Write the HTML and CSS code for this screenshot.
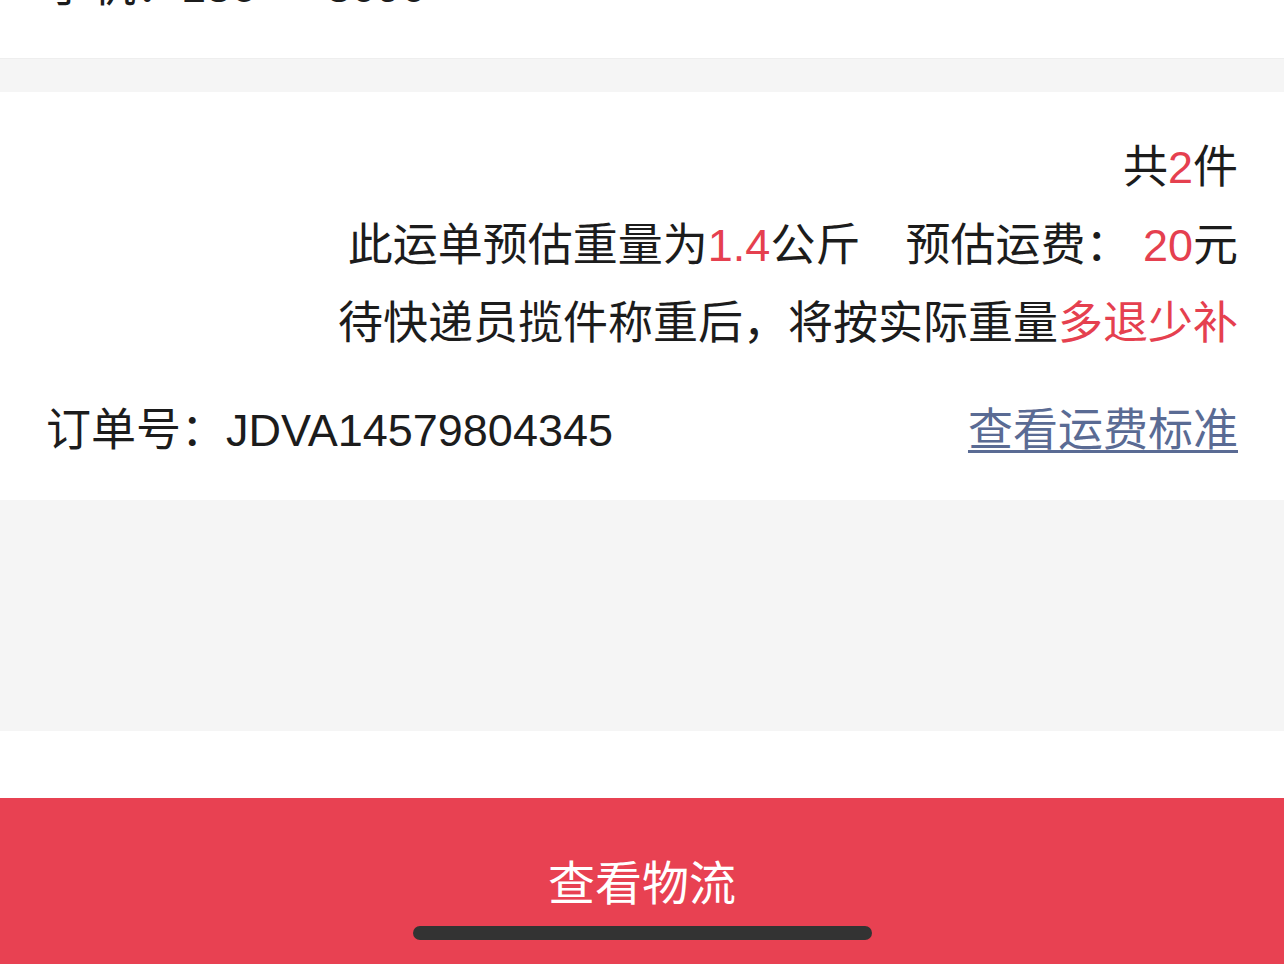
FILE: index.html
```html
<!DOCTYPE html>
<html lang="zh-CN">

<head>
    <meta charset="UTF-8">
    <title>订单详情</title>
    <link rel="stylesheet" href="styles.css">
</head>

<body>
    <div class="page">
        <div class="section top">
            <div class="line">手机：186****8090</div>
        </div>

        <div class="section detail">
            <div class="line right">共<span class="red">2</span>件</div>
            <div class="line right">此运单预估重量为<span class="red">1.4</span>公斤　预估运费： <span class="red">20</span>元</div>
            <div class="line right">待快递员揽件称重后，将按实际重量<span class="red">多退少补</span></div>
            <div class="order">
                <span>订单号：JDVA14579804345</span>
                <a href="#" class="link">查看运费标准</a>
            </div>
        </div>

        <div class="blank"></div>

        <div class="footer">
            <div class="spacer"></div>
            <a href="#" class="btn">查看物流</a>
        </div>

        <div class="home-bar"></div>
    </div>
</body>

</html>
```

FILE: styles.css
```css
html,
body {
    width: 100%;
    height: 100%;
    padding: 0;
    margin: 0;
}

body {
    background: #f5f5f5;
    font-family: "Liberation Sans", "Noto Sans CJK SC", sans-serif;
    font-size: 45px;
    color: #1c1c1c;
    overflow: hidden;
}

.page {
    position: relative;
    height: 964px;
    overflow: hidden;
}

.section {
    background: #fff;
    padding: 0 46px;
}

.line {
    height: 78px;
    line-height: 78px;
    white-space: nowrap;
}

.right {
    text-align: right;
}

.red {
    color: #e5404f;
}

.top {
    height: 58px;
    overflow: hidden;
    border-bottom: 1px solid #eeeeee;
}

.top .line {
    margin-top: -52px;
}

.detail {
    margin-top: 33px;
    padding-top: 37px;
    padding-bottom: 35px;
}

.order {
    display: flex;
    justify-content: space-between;
    align-items: center;
    height: 78px;
    margin-top: 24px;
}

.link {
    color: #5a6b94;
    text-decoration: underline;
    text-underline-offset: 4px;
    text-decoration-thickness: 3px;
}

.blank {
    height: 231px;
}

.footer {
    background: #fff;
}

.spacer {
    height: 67px;
}

.btn {
    display: flex;
    justify-content: center;
    align-items: center;
    height: 162px;
    padding-bottom: 4px;
    background: #e84152;
    color: #fff;
    font-size: 47px;
    text-decoration: none;
}

.home-bar {
    position: absolute;
    left: 413px;
    top: 926px;
    width: 459px;
    height: 14px;
    border-radius: 7px;
    background: #333;
}
```
